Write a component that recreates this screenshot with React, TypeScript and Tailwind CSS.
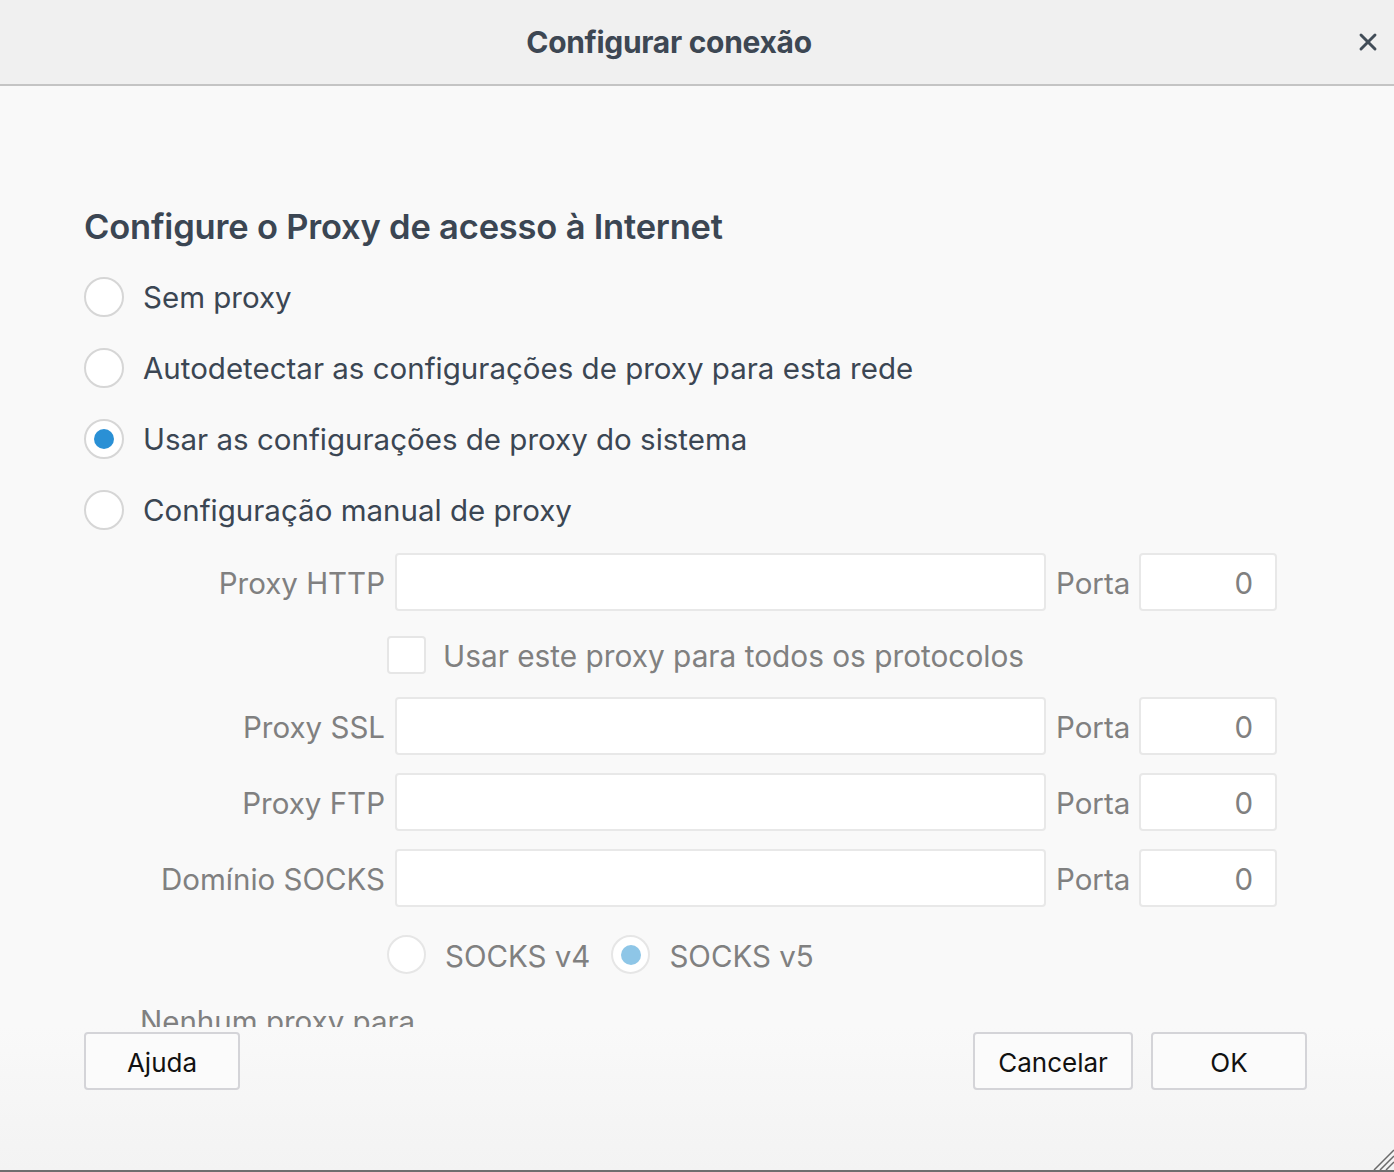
import { X } from 'lucide-react';

function Radio({ checked, dim, size = 40 }: { checked?: boolean; dim?: boolean; size?: number }) {
  return (
    <span
      className={`flex shrink-0 items-center justify-center rounded-full border-2 bg-white ${
        dim ? 'border-[#e6e6e6]' : 'border-[#d6d6d6]'
      } ${size === 40 ? 'w-[40px] h-[40px]' : 'w-[39px] h-[39px]'}`}
    >
      {checked && (
        <span className={`w-[20px] h-[20px] rounded-full ${dim ? 'bg-[#8ec6e7]' : 'bg-[#2a90d5]'}`} />
      )}
    </span>
  );
}

function ProxyRow({ label, className }: { label: string; className?: string }) {
  return (
    <div className={`flex items-center h-[58px] ${className ?? ''}`}>
      <span className="w-[301px] pt-[3px] text-right text-[29.5px] text-[#808080]">{label}</span>
      <div className="ml-[10px] w-[651px] h-[58px] rounded-[4px] border-2 border-[#e8e8e8] bg-white" />
      <span className="ml-[10px] w-[73px] pt-[3px] text-[29.5px] text-[#808080]">Porta</span>
      <div className="ml-[10px] w-[138px] h-[58px] rounded-[4px] border-2 border-[#e8e8e8] bg-white flex items-center justify-end pt-[3px] pr-[22px] text-[29.5px] text-[#808080]">
        0
      </div>
    </div>
  );
}

const options = [
  { label: 'Sem proxy' },
  { label: 'Autodetectar as configurações de proxy para esta rede' },
  { label: 'Usar as configurações de proxy do sistema', checked: true },
  { label: 'Configuração manual de proxy' },
];

export default function App() {
  return (
    <div
      className="relative flex flex-col h-[1172px] w-full bg-[#f9f9f9] border-b-2 border-[#6e6e6e] overflow-hidden"
      style={{ fontFamily: 'Inter, "Noto Sans", sans-serif' }}
    >
      <header className="relative flex items-center justify-center h-[86px] shrink-0 pr-[56px] bg-[#f0f0f0] border-b-2 border-[#c4c4c4]">
        <h1 className="text-[30px] font-bold text-[#3d4753] tracking-[-0.3px]">Configurar conexão</h1>
        <X className="absolute right-[12px] top-[28px] w-[28px] h-[28px] text-[#424d58]" strokeWidth={2.5} />
      </header>

      <div className="h-[941px] shrink-0 overflow-hidden pl-[84px] pt-[121px]">
        <h2 className="h-[40px] leading-[40px] text-[34.5px] font-semibold text-[#3b4653] tracking-[-0.2px]">
          Configure o Proxy de acesso à Internet
        </h2>
        <div className="mt-[14px] flex flex-col">
          {options.map((o) => (
            <div key={o.label} className="flex items-center h-[71px]">
              <Radio checked={o.checked} />
              <span className="ml-[19px] pt-[2px] text-[29.5px] text-[#3b4653]">{o.label}</span>
            </div>
          ))}
        </div>

        <ProxyRow label="Proxy HTTP" className="mt-[8px]" />
        <div className="mt-[25px] flex items-center h-[38px] pl-[303px]">
          <span className="w-[39px] h-[38px] rounded-[4px] border-2 border-[#e6e6e6] bg-white" />
          <span className="ml-[17px] pt-[3px] text-[29.8px] text-[#808080]">Usar este proxy para todos os protocolos</span>
        </div>
        <ProxyRow label="Proxy SSL" className="mt-[23px]" />
        <ProxyRow label="Proxy FTP" className="mt-[18px]" />
        <ProxyRow label="Domínio SOCKS" className="mt-[18px]" />
        <div className="mt-[28px] flex items-center h-[39px] pl-[303px]">
          <Radio dim size={39} />
          <span className="ml-[19px] pt-[3px] text-[29.5px] text-[#808080]">SOCKS v4</span>
          <span className="ml-[21px]">
            <Radio dim checked size={39} />
          </span>
          <span className="ml-[19px] pt-[3px] text-[29.5px] text-[#808080]">SOCKS v5</span>
        </div>
        <div className="mt-[29px] pl-[56px] text-[29.5px] text-[#808080] leading-[36px]">Nenhum proxy para</div>
      </div>

      <footer className="flex-1 flex items-start pt-[5px] px-[84px] pr-[87px] bg-gradient-to-b from-[#f9f9f9] to-[#f3f3f3]">
        <button className="w-[156px] h-[58px] pt-[2px] rounded-[4px] border-2 border-[#d4d4d8] bg-[#fbfbfb] text-[26px] text-[#111]">
          Ajuda
        </button>
        <div className="ml-auto flex gap-[18px]">
          <button className="w-[160px] h-[58px] pt-[2px] rounded-[4px] border-2 border-[#d4d4d8] bg-[#fbfbfb] text-[26px] text-[#111]">
            Cancelar
          </button>
          <button className="w-[156px] h-[58px] pt-[2px] rounded-[4px] border-2 border-[#d4d4d8] bg-[#fbfbfb] text-[26px] text-[#111]">
            OK
          </button>
        </div>
      </footer>

      <svg className="absolute right-0 bottom-0 w-[22px] h-[22px]" viewBox="0 0 22 22">
        <path d="M2 22 L22 2 M8 22 L22 8 M14 22 L22 14" stroke="#6a6a6a" strokeWidth="1.5" />
      </svg>
    </div>
  );
}
